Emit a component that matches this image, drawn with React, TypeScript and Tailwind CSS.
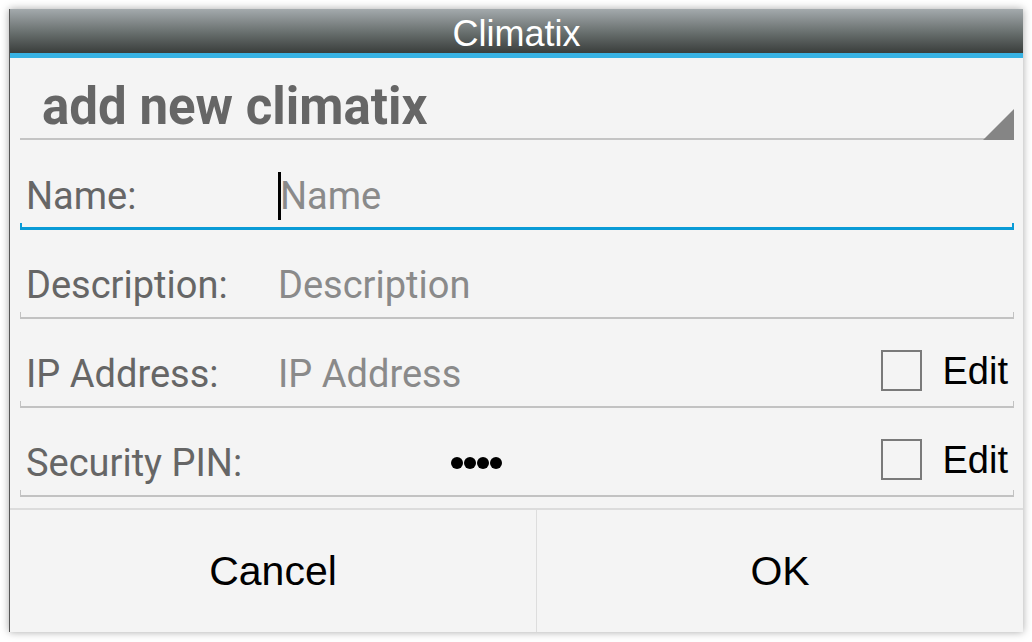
import React from 'react';

const font = { fontFamily: 'Roboto, "Noto Sans", sans-serif' };
const arial = { fontFamily: '"Liberation Sans", Arial, sans-serif' };

const Bracket = ({ active }: { active?: boolean }) => (
  <div
    className={
      active
        ? 'h-[7px] border-x-2 border-b-[3px] border-[#0a9bd6]'
        : 'h-[7px] border-x border-b-2 border-[#c2c2c2]'
    }
  />
);

const Field = ({
  label,
  placeholder,
  active,
  edit,
  pin,
}: {
  label: string;
  placeholder?: string;
  active?: boolean;
  edit?: boolean;
  pin?: boolean;
}) => (
  <div className="h-[89px] flex flex-col">
    <div className="h-[82px] pt-[27px] flex items-center">
      <div className="w-[258px] pl-[6px] text-[38px] text-[#666666] leading-none">{label}</div>
      <div className="flex-1 flex items-center text-[38px] leading-none">
        {active && <span className="w-[3px] h-[48px] bg-black -mr-[1px]" />}
        {pin ? (
          <div className="ml-[173px] flex gap-[1px]">
            <span className="w-[12px] h-[12px] rounded-full bg-black" />
            <span className="w-[12px] h-[12px] rounded-full bg-black" />
            <span className="w-[12px] h-[12px] rounded-full bg-black" />
            <span className="w-[12px] h-[12px] rounded-full bg-black" />
          </div>
        ) : (
          <span className="text-[#8a8a8a]">{placeholder}</span>
        )}
      </div>
      {edit && (
        <div className="flex items-center gap-[21px] pr-[6px] -mt-[6px]">
          <div className="w-[41px] h-[41px] border-2 border-[#7a7a7a] bg-[#f4f4f4]" />
          <span className="text-[38px] text-black leading-none" style={arial}>Edit</span>
        </div>
      )}
    </div>
    <Bracket active={active} />
  </div>
);

export default function App() {
  return (
    <div className="w-[1032px] h-[642px] bg-white p-[9px]" style={font}>
      <div className="w-[1014px] h-[623px] bg-[#f4f4f4] flex flex-col shadow-[0_0_8px_rgba(0,0,0,0.35)] border-l border-[#555]">
        <div className="h-[44px] bg-gradient-to-b from-[#a4aaad] via-[#6c7372] to-[#3a3e3c] flex items-center justify-center">
          <span className="text-white text-[36px] leading-none pt-[5px]" style={arial}>Climatix</span>
        </div>
        <div className="h-[5px] bg-[#38b2e3]" />

        <div className="pl-[10px] pr-[9px] flex flex-col">
          <div className="h-[83px] relative flex flex-col">
            <div className="flex-1 flex items-end pl-[22px] pb-[6px]">
              <span className="text-[51px] font-bold text-[#666666] leading-none">add new climatix</span>
            </div>
            <div className="h-[2px] bg-[#c4c4c4]" />
            <div className="h-[1px]" />
            <div className="absolute right-0 bottom-[1px] w-0 h-0 border-l-[31px] border-l-transparent border-b-[31px] border-b-[#858585]" />
          </div>

          <Field label="Name:" placeholder="Name" active />
          <Field label="Description:" placeholder="Description" />
          <Field label="IP Address:" placeholder="IP Address" edit />
          <Field label="Security PIN:" pin edit />
        </div>

        <div className="h-[11px]" />
        <div className="h-[2px] bg-[#dcdcdc]" />
        <div className="flex-1 flex">
          <div className="w-[527px] flex items-center justify-center border-r border-[#dddddd]">
            <span className="text-[41px] text-black leading-none" style={arial}>Cancel</span>
          </div>
          <div className="flex-1 flex items-center justify-center">
            <span className="text-[41px] text-black leading-none" style={arial}>OK</span>
          </div>
        </div>
      </div>
    </div>
  );
}
